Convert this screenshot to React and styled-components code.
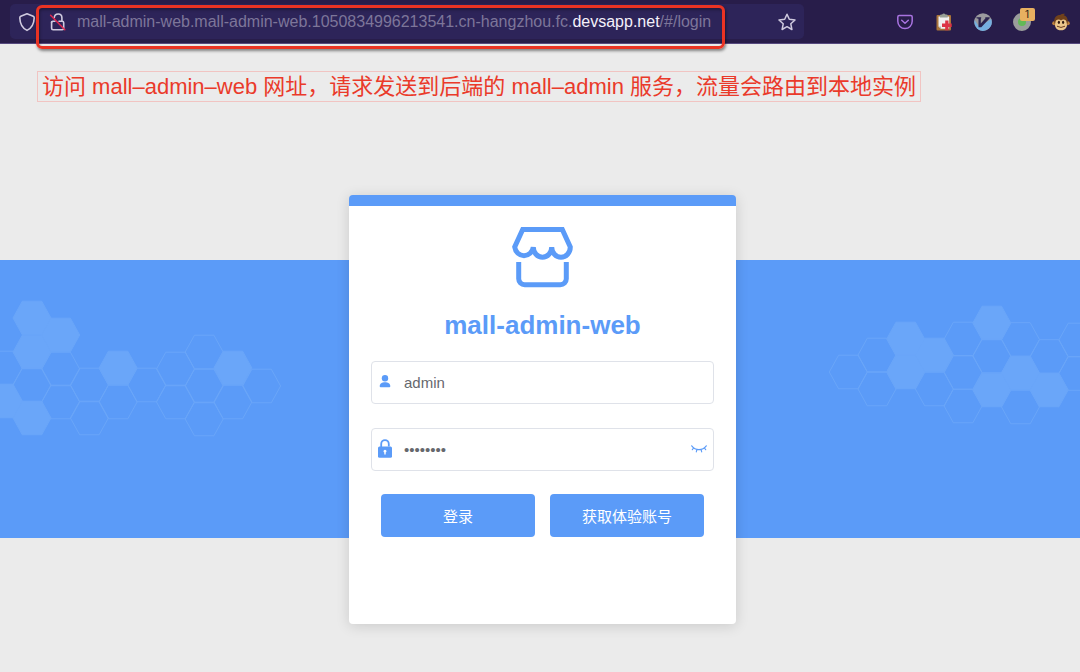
import React from "react";
import styled, { createGlobalStyle } from "styled-components";

const GlobalStyle = createGlobalStyle`
  *, *::before, *::after { box-sizing: border-box; }
  body { margin: 0; background: #ebebeb; }
  button, input { font: inherit; }
`;

const blue = "#5b9bf8";

const Page = styled.div`
  min-height: 100vh;
  display: flex;
  flex-direction: column;
  overflow-x: hidden;
  background: #ebebeb;
  font-family: "Liberation Sans", "Noto Sans CJK SC", sans-serif;
`;

/* ---------- browser toolbar ---------- */

const Toolbar = styled.header`
  display: flex;
  align-items: flex-start;
  gap: 81px;
  height: 44px;
  padding: 4px 0 0 10px;
  background: #281d4a;
  border-bottom: 1px solid #56497f;
`;

const AddressBar = styled.div`
  flex: 1;
  min-width: 0;
  display: flex;
  align-items: center;
  height: 35px;
  padding-right: 8px;
  border-radius: 5px;
  background: #2d2459;
`;

const IconButton = styled.button`
  display: flex;
  align-items: center;
  justify-content: center;
  flex: none;
  width: ${(p) => p.$width}px;
  height: 35px;
  padding: 0;
  border: 0;
  background: transparent;
  cursor: pointer;
  svg { display: block; }
`;

const UrlGroup = styled.div`
  position: relative;
  display: flex;
  align-items: center;
  gap: 6px;
  height: 35px;
  margin-left: -8px;
  padding: 0 14px 0 9px;
  &::after {
    content: "";
    position: absolute;
    inset: 1px 0 -10px 0;
    border: 3px solid #ea3323;
    border-radius: 6px;
    box-shadow: 1px 2px 3px rgba(0, 0, 0, 0.45), inset 1px 2px 3px rgba(0, 0, 0, 0.3);
    pointer-events: none;
  }
`;

const Url = styled.span`
  color: #7d7699;
  font-size: 16px;
  line-height: 20px;
  white-space: nowrap;
  strong { color: #f4f1fb; font-weight: 400; }
`;

const Spacer = styled.div`
  flex: 1;
`;

const Extensions = styled.nav`
  display: flex;
  flex: none;
`;

/* ---------- note ---------- */

const Note = styled.p`
  align-self: flex-start;
  margin: 27px 0 0 37px;
  padding: 0 4px;
  border: 1px solid #f1c4c2;
  color: #ea3a2a;
  font-size: 22px;
  line-height: 29px;
  white-space: nowrap;
`;

/* ---------- login ---------- */

const Stage = styled.main`
  display: grid;
  grid-template-columns: calc(50% - 191px) 387px 1fr;
  grid-template-rows: 65px 278px auto;
  margin-top: 93px;
  padding-bottom: 48px;
`;

const Band = styled.div`
  grid-column: 1 / -1;
  grid-row: 2;
  display: flex;
  justify-content: space-between;
  background: ${blue};
  overflow: hidden;
  svg { display: block; flex: none; }
`;

const Card = styled.form`
  grid-column: 2;
  grid-row: 1 / 4;
  display: flex;
  flex-direction: column;
  padding: 20px 22px 87px;
  border-top: 11px solid ${blue};
  border-radius: 4px;
  background: #fff;
  box-shadow: 0 2px 14px rgba(0, 0, 0, 0.14);
`;

const Logo = styled.svg`
  display: block;
  align-self: center;
`;

const Title = styled.h1`
  margin: 22px 0 20px;
  color: ${blue};
  font-size: 26px;
  font-weight: 700;
  line-height: 31px;
  text-align: center;
`;

const Field = styled.label`
  display: flex;
  align-items: center;
  height: 43px;
  margin-bottom: ${(p) => p.$gap}px;
  border: 1px solid #dfe2e9;
  border-radius: 4px;
  background: #fff;
`;

const FieldIcon = styled.span`
  display: flex;
  justify-content: center;
  flex: none;
  width: 26px;
  svg { display: block; }
`;

const Input = styled.input`
  flex: 1;
  min-width: 0;
  height: 41px;
  padding: 0 6px;
  border: 0;
  outline: 0;
  background: transparent;
  color: #66686d;
  font-size: 15px;
`;

const Actions = styled.div`
  display: flex;
  gap: 15px;
  padding: 0 10px;
`;

const Button = styled.button`
  flex: 1;
  height: 43px;
  padding: 0;
  border: 0;
  border-radius: 4px;
  background: ${blue};
  color: #fff;
  font-size: 15px;
  cursor: pointer;
`;

/* Each hexagon is [column, centre y, filled]. */
const leftCells = [
  [-1, 108, 0], [-1, 141, 1], [0, 58, 1], [0, 92, 1], [0, 125, 0], [0, 158, 1],
  [1, 75, 1], [1, 109, 0], [1, 142, 0], [2, 125, 0], [2, 158, 0],
  [3, 108, 1], [3, 142, 0], [4, 125, 0], [5, 109, 0], [5, 142, 0],
  [6, 92, 0], [6, 126, 0], [6, 159, 0], [7, 108, 1], [7, 142, 0], [8, 126, 0],
];
const rightCells = [
  [0, 112, 0], [1, 95, 0], [1, 129, 0], [2, 79, 1], [2, 112, 1],
  [3, 95, 1], [3, 129, 0], [4, 79, 0], [4, 112.5, 0], [4, 146, 0],
  [5, 63, 1], [5, 96, 0], [5, 130, 1], [6, 79.5, 0], [6, 113, 1], [6, 147, 0],
  [7, 96.5, 0], [7, 130, 1], [8, 80, 0], [8, 113.5, 0],
];

function Honeycomb({ cells, firstX, width }) {
  const hex = (cx, cy) =>
    [[-19, 0], [-9.7, -16.8], [9.7, -16.8], [19, 0], [9.7, 16.8], [-9.7, 16.8]]
      .map(([x, y]) => `${cx + x},${cy + y}`)
      .join(" ");
  return (
    <svg width={width} height="278" viewBox={`0 0 ${width} 278`} aria-hidden="true">
      {cells.map(([col, cy, filled]) => (
        <polygon
          key={`${col}-${cy}`}
          points={hex(firstX + col * 28.7, cy)}
          fill={filled ? "#6aa6f9" : "none"}
          stroke="#6aa6f9"
          strokeWidth="1"
        />
      ))}
    </svg>
  );
}

const ShieldIcon = () => (
  <svg width="18" height="20" viewBox="0 0 18 20" fill="none" stroke="#cfcadf" strokeWidth="1.6" strokeLinejoin="round">
    <path d="M9 1.8 15.2 4.3Q16.3 4.8 16.2 6C16 11.5 13.6 16.2 9 18.4C4.4 16.2 2 11.5 1.8 6Q1.7 4.8 2.8 4.3Z" />
  </svg>
);

const InsecureIcon = () => (
  <svg width="18" height="20" viewBox="0 0 18 20" fill="none">
    <g stroke="#cfcadf" strokeWidth="1.6" strokeLinejoin="round" strokeLinecap="round">
      <path d="M5.3 5.5C5.5 3.3 7 2 9.2 2C11.5 2 12.9 3.6 12.9 5.8V9.2" />
      <path d="M2.6 9.9V16.3Q2.6 17.8 4.1 17.8H13.2Q14.7 17.8 14.7 16.3V10.8Q14.7 9.3 13.2 9.3H10" />
      <path d="M2.6 10.5Q2.6 9.3 3.8 9.3H6" />
    </g>
    <path d="M1.6 3.2 15.8 17.8" stroke="#e22850" strokeWidth="1.5" strokeLinecap="round" />
  </svg>
);

const StarIcon = () => (
  <svg width="18" height="18" viewBox="0 0 18 18" fill="none" stroke="#cfcadf" strokeWidth="1.5" strokeLinejoin="round">
    <path d="M9 1.2 11.3 6.3 17 7 12.8 10.8 13.9 16.5 9 13.7 4.1 16.5 5.2 10.8 1 7 6.7 6.3Z" />
  </svg>
);

const PocketIcon = () => (
  <svg width="16" height="16" viewBox="0 0 16 16" fill="none" stroke="#a873e0" strokeWidth="1.5" strokeLinecap="round" strokeLinejoin="round">
    <path d="M2.300 1.500H13.700Q15.200 1.500 15.200 3V7.300C15.200 11.400 12 14.500 8 14.500S0.800 11.400 0.800 7.300V3Q0.800 1.500 2.300 1.500Z" />
    <path d="M4.700 6.200 8 9.200 11.300 6.200" />
  </svg>
);

const ClipboardIcon = () => (
  <svg width="18" height="18" viewBox="0 0 18 18">
    <rect x="1.500" y="2" width="14.500" height="15.500" rx="1" fill="#a9743a" />
    <path d="M3.500 3.500H14.200V15.800H6L3.500 13.500Z" fill="#f1f0f0" />
    <path d="M3.500 13.500H6V15.800Z" fill="#bbb" />
    <path d="M5 4.500V2.500Q5 1.500 6.300 1.500H7Q8.800-.3 10.600 1.500H11.500Q12.700 1.500 12.700 2.500V4.500Z" fill="#98a095" />
    <path d="M10.200 7.500H13.500V10.500H16.700V14H13.500V17.300H10.200V14H7V10.500H10.200Z" fill="#dc3444" />
  </svg>
);

const VimiumIcon = () => (
  <svg width="18" height="18" viewBox="0 0 18 18">
    <circle cx="9" cy="9" r="8.800" fill="#9b9b9e" />
    <path d="M17.200 6A8.800 8.800 0 0 1 3 15.400Z" fill="#75afe0" />
    <path d="M.6 7 7.500 17.600A8.800 8.800 0 0 1 .6 7Z" fill="#75afe0" />
    <path d="M2.500 4.200H7.200V5.200L6.800 5.600V10.500L11.300 5.500V4.200H15.700V5.200L7.300 14.200H4.500V5.800L2.500 5.200Z" fill="#2b2450" />
  </svg>
);

const MonkeyIcon = () => (
  <svg width="18" height="18" viewBox="0 0 18 18">
    <circle cx="2.200" cy="10.200" r="2" fill="#bd813f" />
    <circle cx="15.800" cy="10.200" r="2" fill="#bd813f" />
    <path d="M2.200 9C2 4.500 4.500 2 8 2Q10 .3 13 .8L11.700 2.300C14.500 3 16 5.500 15.800 9L14.500 14H3.500Z" fill="#70411b" />
    <path d="M3.400 9.500C3.400 6.500 7 5.500 9 7.500C11 5.500 14.600 6.500 14.600 9.500C16 13.500 13.500 17.300 9 17.300S2 13.500 3.400 9.500Z" fill="#ebc68b" />
    <ellipse cx="6.900" cy="9.300" rx="1.100" ry="1.600" fill="#2f1b12" />
    <ellipse cx="11.100" cy="9.300" rx="1.100" ry="1.600" fill="#2f1b12" />
    <path d="M5 13.200Q9 15.700 13 13.200" fill="none" stroke="#6b3d20" strokeWidth="1" />
  </svg>
);

const StatusDot = styled.span`
  position: relative;
  width: 18px;
  height: 18px;
  border: 5px solid #9a9d9b;
  border-radius: 50%;
  background: #63b956;
`;

const Badge = styled.span`
  position: absolute;
  top: -10px;
  left: 2px;
  width: 15px;
  height: 13px;
  border-radius: 2px;
  background: #e8b060;
  color: #2a2015;
  font-family: Inter, sans-serif;
  font-size: 10px;
  line-height: 13px;
  text-align: center;
`;

export default function App() {
  return (
    <Page>
      <GlobalStyle />
      <Toolbar>
        <AddressBar>
          <IconButton type="button" $width={34} aria-label="Tracking protection">
            <ShieldIcon />
          </IconButton>
          <UrlGroup>
            <IconButton type="button" $width={26} aria-label="Connection not secure">
              <InsecureIcon />
            </IconButton>
            <Url>
              mall-admin-web.mall-admin-web.1050834996213541.cn-hangzhou.fc.<strong>devsapp.net</strong>/#/login
            </Url>
          </UrlGroup>
          <Spacer />
          <IconButton type="button" $width={18} aria-label="Bookmark">
            <StarIcon />
          </IconButton>
        </AddressBar>
        <Extensions aria-label="Extensions">
          <IconButton type="button" $width={39} aria-label="Pocket"><PocketIcon /></IconButton>
          <IconButton type="button" $width={39} aria-label="Clipboard"><ClipboardIcon /></IconButton>
          <IconButton type="button" $width={39} aria-label="Vimium"><VimiumIcon /></IconButton>
          <IconButton type="button" $width={39} aria-label="Proxy">
            <StatusDot><Badge>1</Badge></StatusDot>
          </IconButton>
          <IconButton type="button" $width={39} aria-label="Monkey"><MonkeyIcon /></IconButton>
        </Extensions>
      </Toolbar>

      <Note>访问 mall–admin–web 网址，请求发送到后端的 mall–admin 服务，流量会路由到本地实例</Note>

      <Stage>
        <Band>
          <Honeycomb cells={leftCells} firstX={32} width={282} />
          <Honeycomb cells={rightCells} firstX={20.3} width={252} />
        </Band>
        <Card onSubmit={(e) => e.preventDefault()}>
          <Logo width="61" height="62" viewBox="0 0 61 62" fill="none" stroke={blue} strokeWidth="5" aria-hidden="true">
            <path d="M10.700 3.500H50.300L58.300 21A9.300 10.200 0 0 1 39.700 21A9.200 10.200 0 0 1 21.300 21A9.400 10.200 0 0 1 2.700 21Z" />
            <path d="M6.700 36V52.800A6 6 0 0 0 12.700 58.800H48.300A6 6 0 0 0 54.300 52.800V36" />
          </Logo>
          <Title>mall-admin-web</Title>
          <Field $gap={24}>
            <FieldIcon>
              <svg width="14" height="16" viewBox="0 0 14 16" fill={blue} aria-hidden="true">
                <circle cx="7" cy="3.300" r="3.200" />
                <path d="M1.700 11.300C1.700 8.500 4 7.300 7 7.300S12.300 8.500 12.300 11.300Q12.300 12.300 11.300 12.300H2.700Q1.700 12.300 1.700 11.300Z" />
              </svg>
            </FieldIcon>
            <Input type="text" name="username" aria-label="Username" defaultValue="admin" />
          </Field>
          <Field $gap={23}>
            <FieldIcon>
              <svg width="14" height="22" viewBox="0 0 14 22" aria-hidden="true">
                <path d="M3.200 9V5A3.800 3.900 0 0 1 10.800 5V7.500" fill="none" stroke={blue} strokeWidth="1.800" />
                <rect y="7.500" width="14" height="11.200" rx="1.500" fill={blue} />
                <path d="M5.500 12.300A1.500 1.500 0 1 1 8.500 12.300Q8.500 13.100 7.700 13.600V15.600H6.300V13.600Q5.500 13.100 5.500 12.300Z" fill="#fff" />
              </svg>
            </FieldIcon>
            <Input type="password" name="password" aria-label="Password" defaultValue="12345678" />
            <IconButton type="button" $width={28} aria-label="Show password">
              <svg width="16" height="10" viewBox="0 0 16 10" fill="none" stroke={blue} strokeWidth="1.100" strokeLinecap="round">
                <path d="M.7 .8Q3.500 4.600 8 4.600T15.300 .8M2.700 2.900 1.300 4.700M5.900 4.500 5.300 6.900M10.100 4.500 10.700 6.900M13.300 2.900 14.700 4.700" />
              </svg>
            </IconButton>
          </Field>
          <Actions>
            <Button type="submit">登录</Button>
            <Button type="button">获取体验账号</Button>
          </Actions>
        </Card>
      </Stage>
    </Page>
  );
}
